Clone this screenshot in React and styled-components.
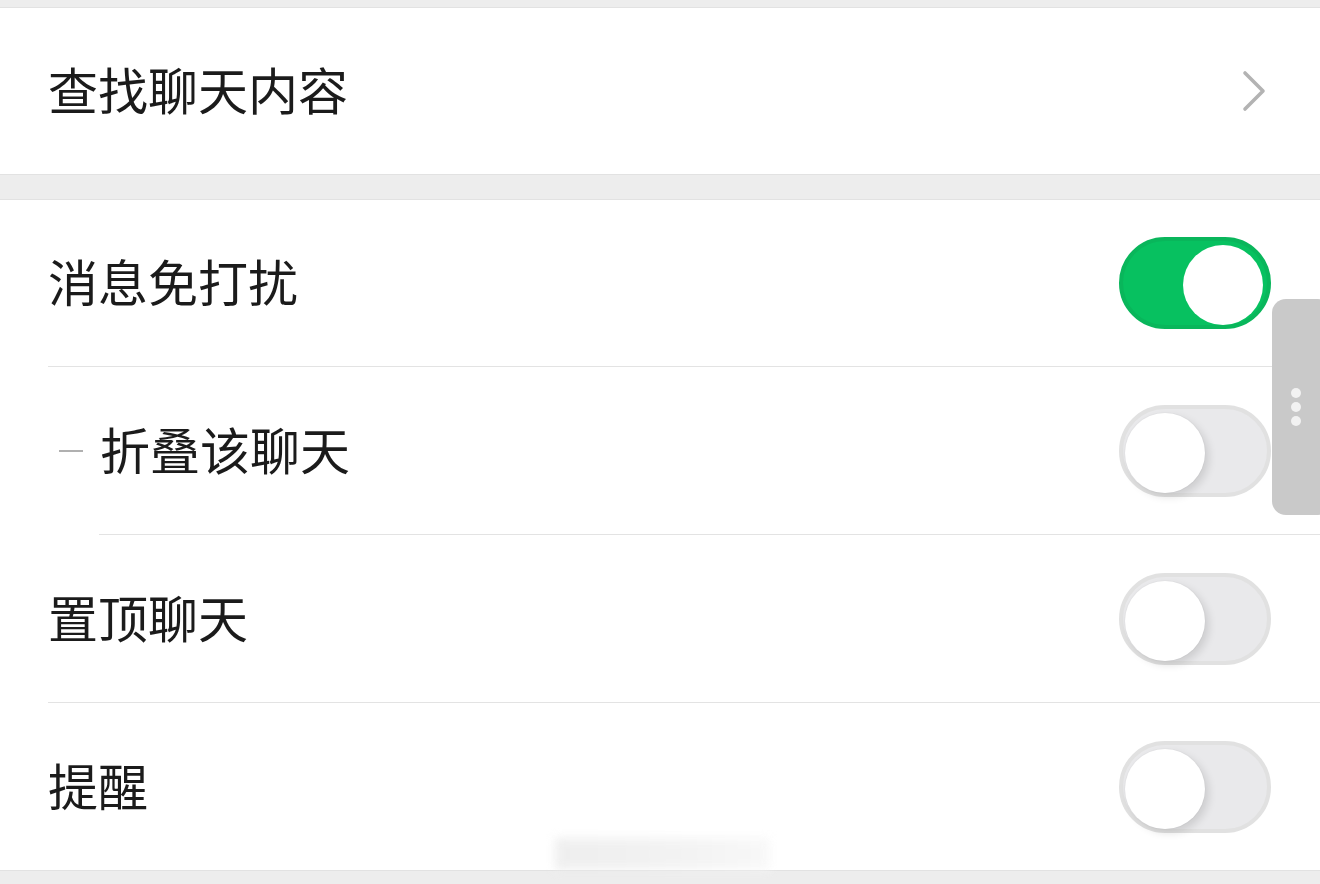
import React from "react";
import styled, { createGlobalStyle } from "styled-components";

const Global = createGlobalStyle`
  html, body { margin: 0; padding: 0; background: #ededed; }
  body { font-family: "Noto Sans CJK SC", "Noto Sans", sans-serif; }
`;

const Page = styled.div`
  position: relative;
  width: 1320px;
  height: 884px;
  overflow: hidden;
  background: #ededed;
  padding-top: 7px;
  box-sizing: border-box;
`;

const Group = styled.div`
  background: #fff;
  border-top: 1px solid #e2e2e2;
  border-bottom: 1px solid #e2e2e2;
  margin-bottom: ${(p) => p.gap || 0}px;
`;

const Row = styled.div`
  height: ${(p) => p.h || 167}px;
  display: flex;
  align-items: center;
  padding-left: ${(p) => (p.indent ? 59 : 48)}px;
  padding-right: 48px;
  box-sizing: border-box;
  position: relative;
`;

const Divider = styled.div`
  height: 1px;
  background: #e3e3e3;
  margin-left: ${(p) => p.left}px;
`;

const Label = styled.div`
  flex: 1;
  font-size: 50px;
  color: #1b1b1b;
  line-height: 1;
  display: flex;
  align-items: center;
  margin-top: -6px;
`;

const Dash = styled.span`
  display: inline-block;
  width: 24px;
  height: 2px;
  background: #b0b0b0;
  margin-top: 6px;
  margin-right: 17px;
`;

const Chevron = styled.svg`
  width: 28px;
  height: 44px;
  margin-right: 4px;
  margin-top: 0px;
`;

const Track = styled.div`
  width: 152px;
  height: 92px;
  border-radius: 46px;
  box-sizing: border-box;
  position: relative;
  background: ${(p) => (p.on ? "#07c160" : "#e9e9eb")};
  border: 4px solid ${(p) => (p.on ? "#09b65b" : "#e1e1e1")};
  margin-right: 1px;
`;

const Knob = styled.div`
  position: absolute;
  top: 4px;
  ${(p) => (p.on ? "right: 4px;" : "left: 2px;")}
  width: 80px;
  height: 80px;
  border-radius: 50%;
  background: #fff;
  box-shadow: ${(p) =>
    p.on ? "none" : "4px 4px 8px rgba(0,0,0,0.12), 0 0 0 1px rgba(0,0,0,0.02)"};
`;

const Handle = styled.div`
  position: absolute;
  left: 1272px;
  top: 299px;
  width: 60px;
  height: 216px;
  border-radius: 14px;
  background: #c9c9c9;
  display: flex;
  flex-direction: column;
  align-items: flex-start;
  justify-content: center;
  gap: 4px;
  padding-left: 19px;
  box-sizing: border-box;
`;

const Dot = styled.span`
  width: 10px;
  height: 10px;
  border-radius: 50%;
  background: #f2f2f2;
`;

const Blur = styled.div`
  position: absolute;
  left: 555px;
  top: 838px;
  width: 215px;
  height: 32px;
  background: linear-gradient(90deg, #ebebeb 0%, #eeeeee 40%, #f2f2f2 70%, #f7f7f7 100%);
  filter: blur(5px);
  opacity: 0.8;
`;

function Toggle({ on }) {
  return (
    <Track on={on ? 1 : 0}>
      <Knob on={on ? 1 : 0} />
    </Track>
  );
}

export default function App() {
  return (
    <>
      <Global />
      <Page>
        <Group gap={24}>
          <Row h={166}>
            <Label>查找聊天内容</Label>
            <Chevron viewBox="0 0 28 44">
              <path d="M5 4 L23 22 L5 40" fill="none" stroke="#b3b3b3" strokeWidth="3.6" strokeLinecap="round" strokeLinejoin="round" />
            </Chevron>
          </Row>
        </Group>
        <Group>
          <Row h={166}>
            <Label>消息免打扰</Label>
            <Toggle on />
          </Row>
          <Divider left={48} />
          <Row h={167} indent>
            <Label>
              <Dash />
              折叠该聊天
            </Label>
            <Toggle />
          </Row>
          <Divider left={99} />
          <Row h={167}>
            <Label>置顶聊天</Label>
            <Toggle />
          </Row>
          <Divider left={48} />
          <Row h={167}>
            <Label>提醒</Label>
            <Toggle />
          </Row>
        </Group>
        <Blur />
        <Handle>
          <Dot />
          <Dot />
          <Dot />
        </Handle>
      </Page>
    </>
  );
}
